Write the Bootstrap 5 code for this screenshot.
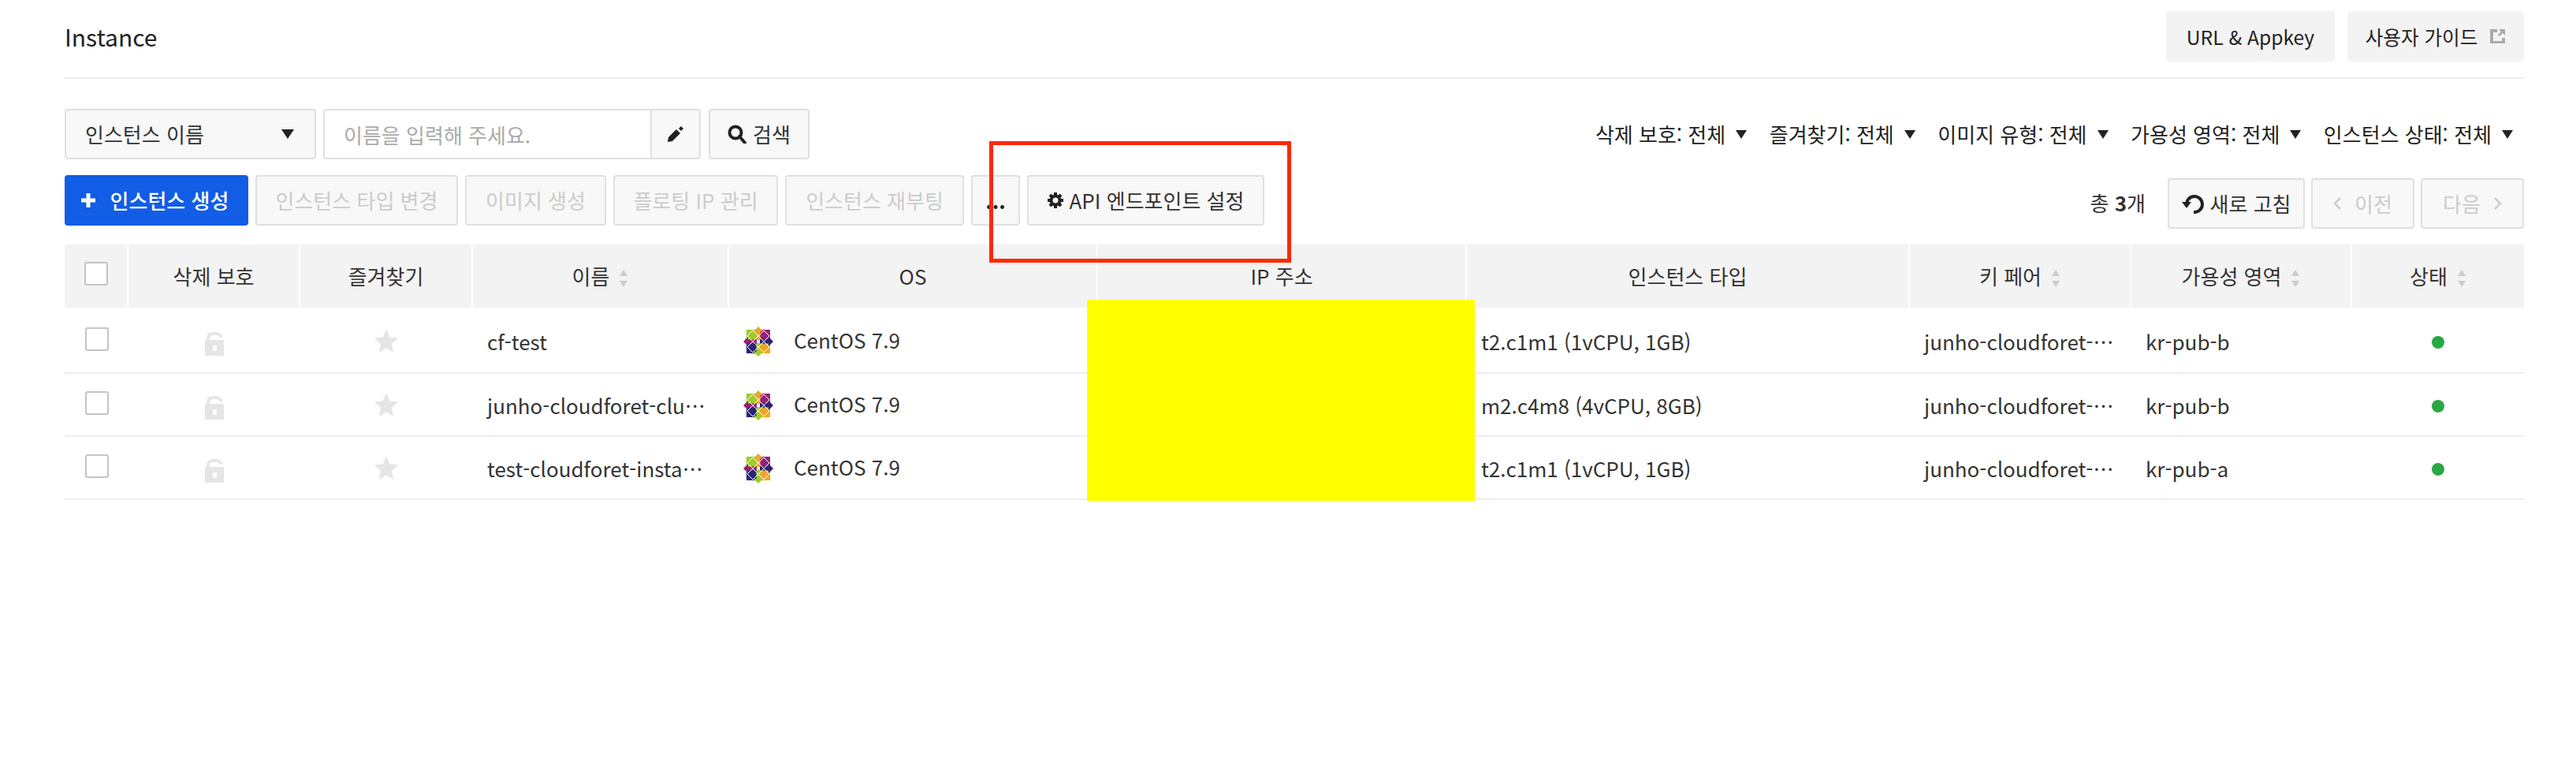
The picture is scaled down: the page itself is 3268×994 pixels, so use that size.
<!DOCTYPE html>
<html lang="ko">
<head>
<meta charset="utf-8">
<title>Instance</title>
<link href="https://cdn.jsdelivr.net/npm/bootstrap@5.3.0/dist/css/bootstrap.min.css" rel="stylesheet">
<style>
body{font-family:"Noto Sans CJK KR","Noto Sans",sans-serif;font-size:26px;color:#333;background:#fff;}
.page-wrap{position:relative;padding:14px 66px 0 82px;min-height:994px;}
.page-top{padding-bottom:20px;border-bottom:2px solid #eee;}
.page-title{font-size:30px;line-height:64px;color:#222;margin:0;font-weight:400;}
.ui-btn{height:64px;font-size:26px;line-height:1;padding:0;border:2px solid #e0e0e0;border-radius:4px;background:#f8f8f8;color:#333;display:inline-flex;align-items:center;justify-content:center;white-space:nowrap;}
.ui-btn:disabled{opacity:1;color:#ccc;background:#f8f8f8;border-color:#e0e0e0;}
.ui-btn:hover{background:#f0f0f0;color:#333;border-color:#e0e0e0;}
.top-btn{border:0;background:#f3f3f3;color:#222;font-size:24.6px;}
.w-url{width:214px;}
.w-guide{width:224px;}
.w-create{width:233px;padding-right:4px;}
.w-type{width:257px;}
.w-image{width:179px;}
.w-float{width:209px;}
.w-reboot{width:227px;}
.w-more{width:62px;font-weight:700;color:#222;}
.w-api{width:301px;}
.w-search{width:128px;margin-left:10px;}
.w-refresh{width:174px;}
.w-page{width:131px;}
.create-btn{background:#125de6;border-color:#125de6;color:#fff;font-weight:500;}
.create-btn:hover{background:#125de6;border-color:#125de6;color:#fff;}
.row-search{margin-top:38px;height:64px;}
.row-actions{margin-top:20px;height:64px;}
.action-list{gap:9px;}
.name-select{width:319px;height:64px;justify-content:space-between;padding:0 26px 0 24px;}
.tri-d{width:0;height:0;display:inline-block;border-left:8px solid transparent;border-right:8px solid transparent;border-top:12px solid #222;}
.tri-f{border-left-width:7.500px;border-right-width:7.500px;border-top-width:11px;margin-left:13px;}
.name-group{width:479px;height:64px;flex-wrap:nowrap;margin-left:9px;}
.name-group .form-control{height:64px;font-size:26px;border:2px solid #e0e0e0;border-right:0;border-radius:4px 0 0 4px;padding:0 24px;color:#333;box-shadow:none;}
.name-group .form-control::placeholder{color:#aaa;}
.name-group .ui-btn{width:64px;border-radius:0 4px 4px 0;}
.filter-item{color:#222;display:inline-flex;align-items:center;line-height:1;}
.filter-list{padding-right:14px;gap:28.500px;}
.right-tools{position:relative;top:4px;}
.tot-text{color:#333;font-size:26px;margin-right:20px;position:relative;top:-2px;}
.tot-text b{font-weight:700;}
.inst-table{table-layout:fixed;width:100%;margin:24px 0 0;border-collapse:collapse;--bs-table-bg:transparent;--bs-table-border-color:#eee;}
.inst-table th{height:80px;background:#f3f3f3;font-weight:400;font-size:26px;text-align:center;vertical-align:middle;border:0;border-right:2px solid #fff;padding:0 18px 2px;color:#333;white-space:nowrap;}
.inst-table th:last-child{border-right:0;}
.inst-table td{padding:0 18px 0 19px;vertical-align:middle;border-bottom:2px solid #eee;font-size:26px;color:#333;white-space:nowrap;overflow:hidden;text-overflow:ellipsis;}
.inst-table td.name-cell{padding-right:22px;}
.inst-table tbody tr{height:80px;}
.inst-table tbody tr:first-child{height:83px;}
.inst-table tbody tr:first-child td{padding-top:2px;}
.cb-box{width:30px;height:30px;border:2px solid #c4c4c4;border-radius:3px;background:#fff;display:block;margin:0 auto;position:relative;top:-2px;}
.sort-ico{display:inline-block;width:12px;height:22px;margin-left:12px;vertical-align:-3px;}
.os-ico{width:38px;height:38px;margin-right:26px;vertical-align:middle;position:relative;top:-1px;}
.star-ico{position:relative;top:-4px;}
.st-dot{width:16px;height:16px;background:#28a745;border-radius:50%;display:block;margin:4px auto 0;}
.hide-ip{position:absolute;left:1379px;top:380px;width:492px;height:255px;background:#ff0;}
.red-frame{position:absolute;left:1255px;top:179px;width:383px;height:154px;border:5px solid #ff2a00;}
.col-center{text-align:center;}
.gap-plus{margin-right:19px;}
</style>
</head>
<body>
<div class="page-wrap">
  <div class="page-top d-flex justify-content-between align-items-center">
    <h1 class="page-title">Instance</h1>
    <div class="d-flex gap-3">
      <button class="btn ui-btn top-btn w-url" type="button">URL &amp; Appkey</button>
      <button class="btn ui-btn top-btn w-guide" type="button">사용자 가이드
        <svg class="ms-3" width="20" height="20" viewBox="0 0 20 20" fill="#aaa"><path d="M0 1h9v4H4v11h11v-4h4v7H0z"/><path d="M11 1h8v8l-3-3-4 4-2-2 4-4z"/></svg>
      </button>
    </div>
  </div>

  <div class="row-search d-flex justify-content-between align-items-center">
    <div class="d-flex align-items-center">
      <button class="btn ui-btn name-select" type="button"><span>인스턴스 이름</span><span class="tri-d"></span></button>
      <div class="input-group name-group">
        <input class="form-control" type="text" placeholder="이름을 입력해 주세요.">
        <button class="btn ui-btn" type="button" aria-label="edit">
          <svg width="20" height="20" viewBox="0 0 20 20" fill="#222"><path d="M0 20l1-6L11 4l5 5L6 19z"/><path d="M14 3l3-3 3 3-3 3z"/></svg>
        </button>
      </div>
      <button class="btn ui-btn w-search" type="button">
        <svg class="me-2" width="24" height="24" viewBox="0 0 24 24" fill="none" stroke="#222" stroke-width="4"><circle cx="10" cy="10" r="7.500"/><path d="M15 15l7 8" stroke-linecap="round"/></svg>검색
      </button>
    </div>
    <div class="d-flex filter-list">
      <span class="filter-item">삭제 보호: 전체<span class="tri-d tri-f"></span></span>
      <span class="filter-item">즐겨찾기: 전체<span class="tri-d tri-f"></span></span>
      <span class="filter-item">이미지 유형: 전체<span class="tri-d tri-f"></span></span>
      <span class="filter-item">가용성 영역: 전체<span class="tri-d tri-f"></span></span>
      <span class="filter-item">인스턴스 상태: 전체<span class="tri-d tri-f"></span></span>
    </div>
  </div>

  <div class="row-actions d-flex justify-content-between align-items-center">
    <div class="d-flex action-list">
      <button class="btn ui-btn create-btn w-create" type="button">
        <svg class="gap-plus" width="18" height="18" viewBox="0 0 18 18" fill="#fff"><path d="M6.500 0h5v6.500H18v5h-6.500V18h-5v-6.500H0v-5h6.500z"/></svg>인스턴스 생성
      </button>
      <button class="btn ui-btn w-type" disabled type="button">인스턴스 타입 변경</button>
      <button class="btn ui-btn w-image" disabled type="button">이미지 생성</button>
      <button class="btn ui-btn w-float" disabled type="button">플로팅 IP 관리</button>
      <button class="btn ui-btn w-reboot" disabled type="button">인스턴스 재부팅</button>
      <button class="btn ui-btn w-more" type="button">...</button>
      <button class="btn ui-btn w-api" type="button">
        <svg class="me-2" width="20" height="20" viewBox="0 0 20 20"><path stroke="#222" stroke-width="4" d="M10 0v20M0 10h20M3 3l14 14M17 3L3 17"/><circle cx="10" cy="10" r="7.500" fill="#222"/><circle cx="10" cy="10" r="3.500" fill="#f8f8f8"/></svg>API 엔드포인트 설정
      </button>
    </div>
    <div class="d-flex align-items-center gap-2 right-tools">
      <span class="tot-text">총 <b>3</b>개</span>
      <button class="btn ui-btn w-refresh" type="button">
        <svg class="me-2" width="28" height="26" viewBox="0 0 28 26" fill="none" stroke="#222" stroke-width="4"><path d="M6 15A10 10 0 1 1 15 24"/><path d="M0 11h12l-6 8z" fill="#222" stroke="none"/></svg>새로 고침
      </button>
      <button class="btn ui-btn w-page" disabled type="button">
        <svg class="me-3" width="11" height="16" viewBox="0 0 11 16" fill="none" stroke="#ccc" stroke-width="2.500"><path d="M9 1L2 8l7 7"/></svg>이전
      </button>
      <button class="btn ui-btn w-page" disabled type="button">다음
        <svg class="ms-3" width="11" height="16" viewBox="0 0 11 16" fill="none" stroke="#ccc" stroke-width="2.500"><path d="M2 1l7 7-7 7"/></svg>
      </button>
    </div>
  </div>

  <svg width="0" height="0" class="d-block" aria-hidden="true">
    <defs>
      <g id="s-sort"><path fill="#ccc" d="M6 0l5 8H1zM1 14h10l-5 8z"/></g>
      <g id="s-logo">
        <path fill="#9ccd2a" d="M4 4h15v15H4z"/><path fill="#932279" d="M19 4h15v15H19z"/>
        <path fill="#262577" d="M4 19h15v15H4z"/><path fill="#efa724" d="M19 19h15v15H19z"/>
        <path fill="#efa724" d="M19 0l6 6h-3.500v11h-5V6H13z"/><path fill="#262577" d="M38 19l-6 6v-3.500H21v-5h11V13z"/>
        <path fill="#9ccd2a" d="M19 38l-6-6h3.500V21h5v11H25z"/><path fill="#932279" d="M0 19l6-6v3.500h11v5H6V25z"/>
        <g fill="none" stroke="#fff" stroke-width="1"><path d="M12 5l7 7-7 7-7-7zM26 5l7 7-7 7-7-7zM12 19l7 7-7 7-7-7zM26 19l7 7-7 7-7-7z"/></g>
        <path fill="#fff" d="M17 17h4v4h-4z"/>
      </g>
      <g id="s-openlock"><path fill="none" stroke="#e5e5e5" stroke-width="4" d="M4 11V8c0-8 15-8 17-1"/><path fill="#e5e5e5" fill-rule="evenodd" d="M0 10h24v20H0zM10 17v7h5v-7z"/></g>
      <g id="s-star"><path fill="#e5e5e5" d="M15 0l4.300 10.500L30 11.500l-8 7.300L24.300 30 15 24.200 5.700 30 8 18.800 0 11.500l10.700-1z"/></g>
    </defs>
  </svg>

  <table class="table inst-table">
    <colgroup>
      <col style="width:80px"><col style="width:218px"><col style="width:219px"><col style="width:325px">
      <col style="width:468px"><col style="width:468px"><col style="width:562px"><col style="width:281px"><col style="width:280px"><col>
    </colgroup>
    <thead>
      <tr>
        <th><span class="cb-box"></span></th>
        <th>삭제 보호</th>
        <th>즐겨찾기</th>
        <th>이름<svg class="sort-ico" viewBox="0 0 12 22"><use href="#s-sort"/></svg></th>
        <th>OS</th>
        <th>IP 주소</th>
        <th>인스턴스 타입</th>
        <th>키 페어<svg class="sort-ico" viewBox="0 0 12 22"><use href="#s-sort"/></svg></th>
        <th>가용성 영역<svg class="sort-ico" viewBox="0 0 12 22"><use href="#s-sort"/></svg></th>
        <th>상태<svg class="sort-ico" viewBox="0 0 12 22"><use href="#s-sort"/></svg></th>
      </tr>
    </thead>
    <tbody>
      <tr>
        <td><span class="cb-box"></span></td>
        <td class="col-center"><svg width="24" height="30" viewBox="0 0 24 30"><use href="#s-openlock"/></svg></td>
        <td class="col-center"><svg class="star-ico" width="30" height="30" viewBox="0 0 30 30"><use href="#s-star"/></svg></td>
        <td class="name-cell">cf-test</td>
        <td><svg class="os-ico" viewBox="0 0 38 38"><use href="#s-logo"/></svg>CentOS 7.9</td>
        <td></td>
        <td>t2.c1m1 (1vCPU, 1GB)</td>
        <td>junho-cloudforet-keypair</td>
        <td>kr-pub-b</td>
        <td><span class="st-dot"></span></td>
      </tr>
      <tr>
        <td><span class="cb-box"></span></td>
        <td class="col-center"><svg width="24" height="30" viewBox="0 0 24 30"><use href="#s-openlock"/></svg></td>
        <td class="col-center"><svg class="star-ico" width="30" height="30" viewBox="0 0 30 30"><use href="#s-star"/></svg></td>
        <td class="name-cell">junho-cloudforet-cluster-instance</td>
        <td><svg class="os-ico" viewBox="0 0 38 38"><use href="#s-logo"/></svg>CentOS 7.9</td>
        <td></td>
        <td>m2.c4m8 (4vCPU, 8GB)</td>
        <td>junho-cloudforet-keypair</td>
        <td>kr-pub-b</td>
        <td><span class="st-dot"></span></td>
      </tr>
      <tr>
        <td><span class="cb-box"></span></td>
        <td class="col-center"><svg width="24" height="30" viewBox="0 0 24 30"><use href="#s-openlock"/></svg></td>
        <td class="col-center"><svg class="star-ico" width="30" height="30" viewBox="0 0 30 30"><use href="#s-star"/></svg></td>
        <td class="name-cell">test-cloudforet-instance-01</td>
        <td><svg class="os-ico" viewBox="0 0 38 38"><use href="#s-logo"/></svg>CentOS 7.9</td>
        <td></td>
        <td>t2.c1m1 (1vCPU, 1GB)</td>
        <td>junho-cloudforet-keypair</td>
        <td>kr-pub-a</td>
        <td><span class="st-dot"></span></td>
      </tr>
    </tbody>
  </table>

  <div class="hide-ip"></div>
  <div class="red-frame"></div>
</div>
<script src="https://cdn.jsdelivr.net/npm/bootstrap@5.3.0/dist/js/bootstrap.bundle.min.js"></script>
</body>
</html>
